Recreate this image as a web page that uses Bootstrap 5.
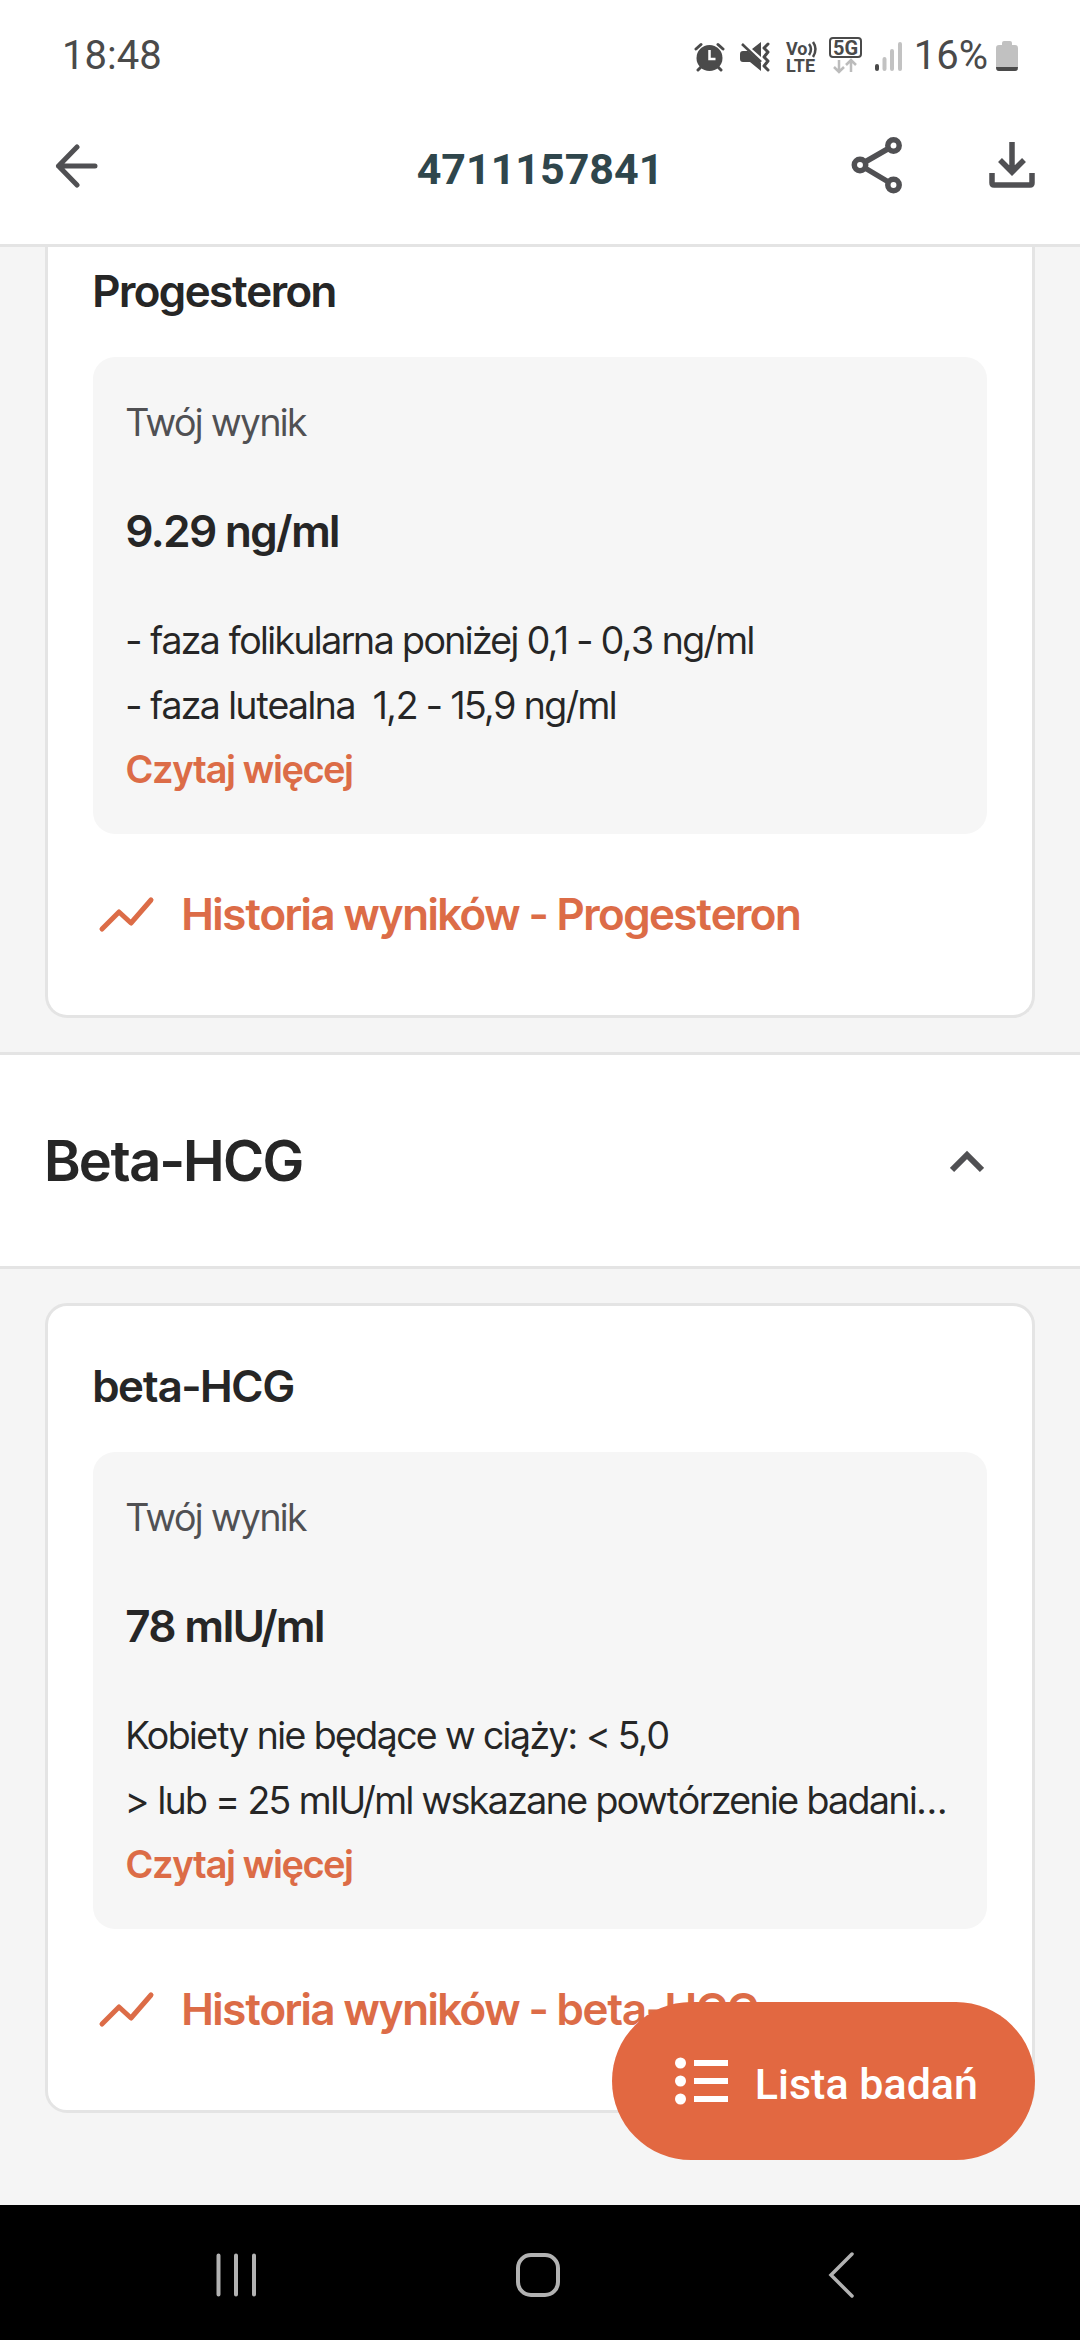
<!DOCTYPE html>
<html lang="pl">
<head>
<meta charset="utf-8">
<meta name="viewport" content="width=device-width, initial-scale=1">
<title>4711157841</title>
<link href="https://cdn.jsdelivr.net/npm/bootstrap@5.3.0/dist/css/bootstrap.min.css" rel="stylesheet">
<style>
  :root { --ink: #262626; --soft: #505053; --accent: #e26841; --link: #dc6c47; --line: #e4e4e4; --ground: #f5f5f5; }
  body { font-family: "Inter Tight", Inter, "Liberation Sans", sans-serif; color: var(--ink); background: var(--ground); font-size: 38px; line-height: 65px; }
  svg { display: block; flex: none; }
  .status-bar { height: 112px; padding: 0 62px; font-family: Roboto, sans-serif; font-size: 40px; line-height: 48px; color: #4a4a4a; background: #fff; }
  .app-bar { height: 135px; padding: 0 45px 26px; background: #fff; border-bottom: 3px solid var(--line); }
  .app-title { font-family: Roboto, sans-serif; font-size: 43px; line-height: 50px; font-weight: 700; color: #2f464c; padding-top: 8px; }
  .app-actions { gap: 86px; }
  .icon-btn { padding: 0; border: 0; background: none; color: var(--soft); }
  .results { padding: 34px 45px; }
  .results.scrolled { padding-top: 0; }
  .result-card { border: 3px solid var(--line); border-radius: 22px; background: #fff; padding: 48px 45px 69px; }
  .scrolled .result-card { border-top: 0; border-top-left-radius: 0; border-top-right-radius: 0; padding-top: 12px; }
  .result-name, .result-value, .history-link { font-size: 44px; line-height: 64px; font-weight: 600; margin: 0; }
  .result-box { background: #f6f6f6; border-radius: 22px; padding: 33px; margin: 34px 0 48px; }
  .result-label { color: var(--soft); margin-bottom: 44px; }
  .result-box .result-value { margin-bottom: 45px; }
  .norm { white-space: pre; }
  .more-link, .history-link { color: var(--link); text-decoration: none; }
  .more-link { font-weight: 600; line-height: 63px; display: block; }
  .section-bar { border: solid var(--line); border-width: 3px 0; background: #fff; height: 217px; padding: 0 96px 0 45px; }
  .section-name { font-size: 56px; line-height: 72px; font-weight: 600; margin: 0; }
  .list-fab { position: fixed; right: 45px; bottom: 180px; height: 158px; padding: 0 57px 0 62px; gap: 25px; border: 0; border-radius: 79px; background: var(--accent); color: #fff; font-family: Roboto, sans-serif; font-size: 43px; font-weight: 500; }
  .list-fab span { padding-top: 6px; }
  .system-nav { height: 135px; padding: 5px 8% 0; background: #000; }
</style>
</head>
<body class="min-vh-100 d-flex flex-column">
<header class="sticky-top">
  <div class="status-bar d-flex align-items-center justify-content-between">
    <span>18:48</span>
    <div class="d-flex align-items-center">
      <svg width="220" height="40" viewBox="690 35 220 40" fill="none" stroke="#4a4a4a">
        <g stroke-width="3" stroke-linecap="round"><path d="M692 48l5-4.500M719 48l-5-4.500M697 66l-3 3M714 66l3 3"/></g>
        <circle cx="705.500" cy="57" r="13" fill="#4a4a4a" stroke="none"/><path d="M705.500 49v9h6" stroke="#fff" stroke-width="2.500"/>
        <path fill="#4a4a4a" stroke="none" d="M736 53q0-3 3-3h5l13 12v8l-11-9h-7q-3 0-3-3zM748 48l9-7v15z"/>
        <path d="M738 43l19 18" stroke-width="2.500"/><path d="M764 43l-4 4 4 4-4 5 4 4-4 5 4 4" stroke-width="3" stroke-linecap="round" stroke-linejoin="round"/>
        <g fill="#4a4a4a" stroke="none" font-family="Roboto" font-weight="700"><text x="782" y="54" font-size="18">Vo</text><text x="782" y="71" font-size="18">LTE</text><text x="829" y="54" font-size="20">5G</text></g>
        <path d="M805 43q4 5 0 11M809 41q5 7 0 15" stroke-width="2.500"/>
        <rect x="826" y="37" width="31" height="19" rx="3" stroke-width="2"/>
        <path d="M835 59v12M830 66l5 5 5-5M847 71v-12M842 64l5-5 5 5" stroke="#bcbcbc" stroke-width="2.500"/>
        <g stroke-width="4" stroke-linecap="round"><path d="M873 65v3"/><path stroke="#c2c2c2" d="M880.500 58v10M888 50v18M896 43v25"/></g>
      </svg>
      <span>16%</span>
      <svg class="ms-2" width="22" height="32" viewBox="0 0 22 32"><path fill="#c1c1c1" d="M6 3q0-2 2-2h6q2 0 2 2v2h3q3 0 3 3v20q0 3-3 3H3q-3 0-3-3V8q0-3 3-3h3z"/><path fill="#4a4a4a" d="M0 27h22q0 4-3 4H3q-3 0-3-4z"/></svg>
    </div>
  </div>
  <div class="app-bar row gx-0 align-items-center">
    <div class="col d-flex"><button class="icon-btn" type="button" aria-label="Wstecz"><svg width="56" height="46" viewBox="0 0 56 46" fill="none" stroke="currentColor" stroke-width="5" stroke-linecap="round" stroke-linejoin="round"><path d="M32 5L13.500 24 32 43M13.500 24H50"/></svg></button></div>
    <h1 class="app-title col-auto mb-0">4711157841</h1>
    <div class="app-actions col d-flex justify-content-end align-items-center">
      <button class="icon-btn" type="button" aria-label="Udostępnij"><svg width="52" height="58" viewBox="0 0 52 58" fill="none" stroke="currentColor" stroke-width="5.500"><circle cx="9" cy="29" r="5.700"/><circle cx="42.500" cy="9.500" r="5.700"/><circle cx="42.500" cy="49" r="5.700"/><path d="M14 26L37.500 12.500M14 32l23.500 14"/></svg></button>
      <button class="icon-btn" type="button" aria-label="Pobierz"><svg width="46" height="48" viewBox="0 0 46 48" fill="none" stroke="currentColor" stroke-width="5.500"><path d="M23 1v30M11 19l12 12 12-12M3 32v10q0 2 2 2h36q2 0 2-2V32"/></svg></button>
    </div>
  </div>
</header>
<main class="flex-grow-1">
  <section class="results scrolled">
    <article class="result-card">
      <h3 class="result-name">Progesteron</h3>
      <div class="result-box">
        <div class="result-label">Twój wynik</div>
        <div class="result-value">9.29 ng/ml</div>
        <div class="norm">- faza folikularna poniżej 0,1 - 0,3 ng/ml</div>
        <div class="norm">- faza lutealna  1,2 - 15,9 ng/ml</div>
        <a class="more-link" href="#">Czytaj więcej</a>
      </div>
      <a class="history-link d-flex align-items-center" href="#"><svg width="89" height="44" viewBox="0 0 89 44" fill="none" stroke="currentColor" stroke-width="5" stroke-linecap="round" stroke-linejoin="round"><path d="M9 37L26 20 38 31 58 8"/></svg>Historia wyników - Progesteron</a>
    </article>
  </section>
  <div class="section-bar d-flex align-items-center justify-content-between">
    <h2 class="section-name">Beta-HCG</h2>
    <button class="icon-btn" type="button" aria-label="Zwiń"><svg width="34" height="24" viewBox="0 0 34 24" fill="none" stroke="currentColor" stroke-width="6"><path d="M2 21L17 6l15 15"/></svg></button>
  </div>
  <section class="results">
    <article class="result-card">
      <h3 class="result-name">beta-HCG</h3>
      <div class="result-box">
        <div class="result-label">Twój wynik</div>
        <div class="result-value">78 mIU/ml</div>
        <div class="norm">Kobiety nie będące w ciąży: &lt; 5,0</div>
        <div class="norm">&gt; lub = 25 mIU/ml wskazane powtórzenie badani…</div>
        <a class="more-link" href="#">Czytaj więcej</a>
      </div>
      <a class="history-link d-flex align-items-center" href="#"><svg width="89" height="44" viewBox="0 0 89 44" fill="none" stroke="currentColor" stroke-width="5" stroke-linecap="round" stroke-linejoin="round"><path d="M9 37L26 20 38 31 58 8"/></svg>Historia wyników - beta-HCG</a>
    </article>
  </section>
</main>
<button class="list-fab d-flex align-items-center" type="button"><svg width="56" height="48" viewBox="0 0 56 48" fill="currentColor"><circle cx="6.500" cy="6" r="5.500"/><circle cx="6.500" cy="24" r="5.500"/><circle cx="6.500" cy="42" r="5.500"/><path d="M20 3h34v6H20zM20 21h34v6H20zM20 39h34v6H20z"/></svg><span>Lista badań</span></button>
<nav class="system-nav row gx-0 align-items-center sticky-bottom">
  <div class="col d-flex justify-content-center"><button class="icon-btn" type="button" aria-label="Ostatnie"><svg width="46" height="46" viewBox="0 0 46 46" fill="none" stroke="#b2b2b2" stroke-width="4" stroke-linecap="round"><path d="M3.500 3.500v39M21 3.500v39M39 3.500v39"/></svg></button></div>
  <div class="col d-flex justify-content-center"><button class="icon-btn" type="button" aria-label="Ekran główny"><svg width="48" height="46" viewBox="0 0 48 46" fill="none" stroke="#b2b2b2" stroke-width="4"><rect x="2" y="3" width="40" height="40" rx="13"/></svg></button></div>
  <div class="col d-flex justify-content-center"><button class="icon-btn" type="button" aria-label="Cofnij"><svg width="28" height="48" viewBox="0 0 28 48" fill="none" stroke="#b2b2b2" stroke-width="3.500" stroke-linecap="round"><path d="M24 3L3 24l21 21"/></svg></button></div>
</nav>
<script src="https://cdn.jsdelivr.net/npm/bootstrap@5.3.0/dist/js/bootstrap.bundle.min.js"></script>
</body>
</html>
